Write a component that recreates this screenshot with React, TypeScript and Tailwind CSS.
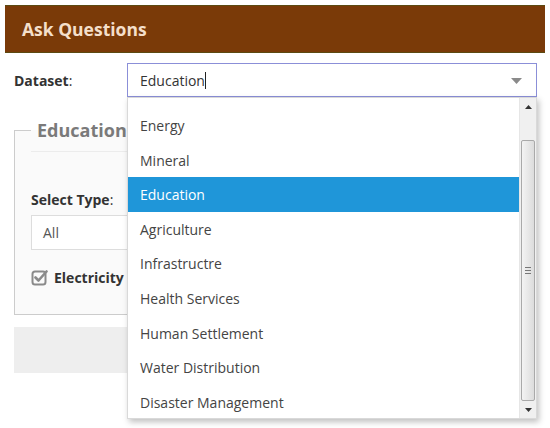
const datasets = [
  "Energy",
  "Mineral",
  "Education",
  "Agriculture",
  "Infrastructre",
  "Health Services",
  "Human Settlement",
  "Water Distribution",
  "Disaster Management",
];

function CheckSquare() {
  return (
    <svg width="17" height="17" viewBox="0 0 17 17" className="shrink-0">
      <rect x="1.5" y="2.5" width="13" height="13" rx="2.5" fill="none" stroke="#8a8a8a" strokeWidth="2" />
      <path d="M4.5 8.5 L7.5 11.5 L15.5 2.5" fill="none" stroke="#8a8a8a" strokeWidth="2.6" strokeLinecap="round" strokeLinejoin="round" />
    </svg>
  );
}

function Scrollbar() {
  return (
    <div className="w-[17px] shrink-0 flex flex-col bg-[#f0f0f0] border-l border-[#e6e6e6]">
      <div className="h-[17px] flex items-center justify-center">
        <svg width="7" height="4" viewBox="0 0 7 4">
          <path d="M0 4 L3.5 0 L7 4 Z" fill="#333" />
        </svg>
      </div>
      <div className="h-[25px]" />
      <div className="flex-1 mx-[1px] rounded-[2px] border border-[#a9a9a9] bg-gradient-to-r from-[#f3f3f3] to-[#dcdcdc] flex items-center justify-center">
        <div className="flex flex-col gap-[2px]">
          <div className="w-[6px] h-[1px] bg-[#777]" />
          <div className="w-[6px] h-[1px] bg-[#777]" />
          <div className="w-[6px] h-[1px] bg-[#777]" />
        </div>
      </div>
      <div className="h-[17px] flex items-center justify-center">
        <svg width="7" height="4" viewBox="0 0 7 4">
          <path d="M0 0 L3.5 4 L7 0 Z" fill="#333" />
        </svg>
      </div>
    </div>
  );
}

export default function App() {
  return (
    <div className="relative w-[550px] h-[428px] overflow-hidden bg-white font-['Open_Sans',sans-serif] text-[#333]">
      {/* Header */}
      <div className="px-[5px] pt-[5px]">
        <div className="h-[48px] bg-[#7a3a08] border-y border-[#5c4a12] flex items-center pl-[17px]">
          <h1 className="text-[17.5px] font-bold text-[#f4dfca]">Ask Questions</h1>
        </div>
      </div>

      {/* Dataset row */}
      <div className="mt-[10px] flex items-center">
        <label className="w-[127px] pl-[14px] text-[14px] text-[#333]">
          <span className="font-bold">Dataset</span>:
        </label>
        <div className="relative w-[410px] h-[34px] border border-[#8b8fd8] bg-white flex items-center pl-[12px]">
          <span className="text-[14px] text-[#333]">Education</span>
          <span className="w-[1px] h-[17px] bg-[#222]" />
          <svg width="11" height="6" viewBox="0 0 11 6" className="absolute right-[14px] top-[14px]">
            <path d="M0 0 L11 0 L5.5 6 Z" fill="#8a8a8a" />
          </svg>

          {/* Open dropdown list */}
          <div className="absolute left-[-1px] top-[33px] z-10 w-[410px] h-[322px] bg-white border border-[#d9d9d9] shadow-[2px_3px_6px_rgba(0,0,0,0.25)] flex">
            <div className="flex-1 overflow-hidden">
              <ul className="pt-[10.2px]">
                {datasets.map((d) => (
                  <li
                    key={d}
                    className={
                      d === "Education"
                        ? "h-[34.6px] flex items-center pl-[12px] text-[14px] bg-[#1f96d9] text-white"
                        : "h-[34.6px] flex items-center pl-[12px] text-[14px] text-[#444]"
                    }
                  >
                    {d}
                  </li>
                ))}
              </ul>
            </div>
            <Scrollbar />
          </div>
        </div>
      </div>

      {/* Fieldset */}
      <fieldset className="mx-[14px] mt-[22px] w-[506px] h-[196px] border border-[#cccccc] bg-[#fafafa] px-[16px]">
        <legend className="px-[6px] text-[18px] font-bold text-[#7a7a7a] leading-[22px]">Education</legend>
        <div className="mt-[10px] h-[1px] bg-[#ececec]" />
        <div className="mt-[38px] text-[14px] leading-[20px]">
          <span className="font-bold">Select Type</span>:
        </div>
        <div className="mt-[5px] w-[300px] h-[35px] border border-[#dddddd] bg-white flex items-center pl-[11px] text-[14px] text-[#555]">
          All
        </div>
        <div className="mt-[17px] flex items-center gap-[6px]">
          <CheckSquare />
          <span className="text-[14px] font-bold">Electricity</span>
        </div>
      </fieldset>

      {/* Submit area */}
      <div className="mx-[14px] mt-[12px] w-[506px] h-[46px] bg-[#eeeeee]" />
    </div>
  );
}
